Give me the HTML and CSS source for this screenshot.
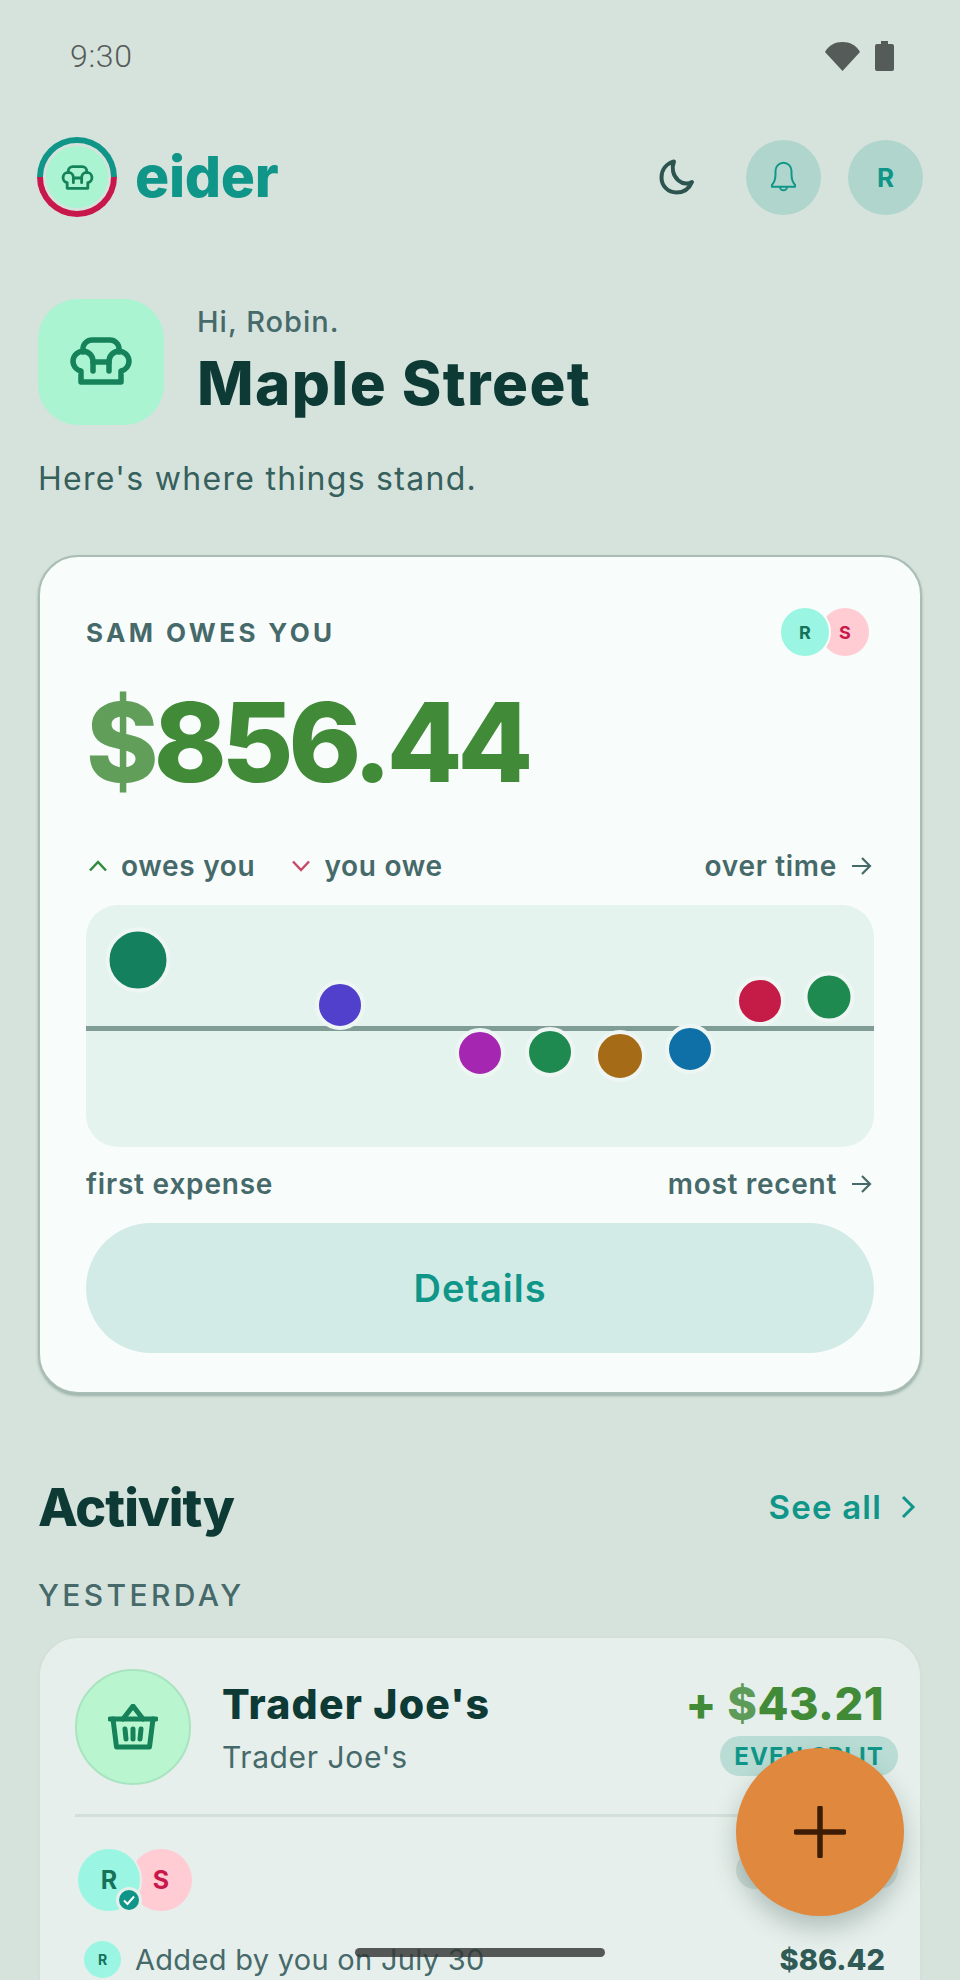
FILE: index.html
```html
<!DOCTYPE html>
<html lang="en">
<head>
<meta charset="utf-8">
<title>eider</title>
<link rel="stylesheet" href="styles.css">
</head>
<body>
<div class="screen">
  <div class="status">
    <span class="time">9:30</span>
    <div class="status-icons">
      <svg class="wifi" viewBox="0 0 35 29"><path d="M0 10C4 3 10 0 17.500 0S31 3 35 10L17.500 29Z"/></svg>
      <svg class="battery" viewBox="0 0 19 30"><path d="M6 0h7v3h4a2 2 0 0 1 2 2v23a2 2 0 0 1-2 2H2a2 2 0 0 1-2-2V5a2 2 0 0 1 2-2h4Z"/></svg>
    </div>
  </div>

  <header class="topbar">
    <div class="brand">
      <div class="logo">
        <div class="logo-disc">
          <svg class="chair chair-small" viewBox="0 0 64 48"><path d="M24 34V24A10 10 0 1 0 12 34V45H52V34A10 10 0 1 0 40 24V34"/><path d="M14 15V12A9 9 0 0 1 23 3H41A9 9 0 0 1 50 12V15"/><path d="M24 25H40"/></svg>
        </div>
      </div>
      <span class="wordmark">eider</span>
    </div>
    <div class="actions">
      <svg class="moon" viewBox="0 0 36 36"><path d="M15 2.500C8 4.500 2.500 10 2.500 18.500C2.500 27 9 33.500 17.500 33.500C25 33.500 30.500 29 33 23C30 25 24 25.500 19.500 21.500C13.500 16.500 12.500 8.500 15 2.500Z"/></svg>
      <div class="round-btn">
        <svg class="bell" viewBox="0 0 30 36"><path d="M2 27C5 24 6 20 6 15V11A9 9 0 0 1 24 11V15C24 20 25 24 28 27V29H2Z"/><path d="M11 29A4 4 0 0 0 19 29"/></svg>
      </div>
      <div class="round-btn user">R</div>
    </div>
  </header>

  <section class="hero">
    <div class="hero-icon">
      <svg class="chair chair-large" viewBox="0 0 64 48"><path d="M24 34V24A10 10 0 1 0 12 34V45H52V34A10 10 0 1 0 40 24V34"/><path d="M14 15V12A9 9 0 0 1 23 3H41A9 9 0 0 1 50 12V15"/><path d="M24 25H40"/></svg>
    </div>
    <div class="hero-text">
      <div class="hi">Hi, Robin.</div>
      <h1 class="place">Maple Street</h1>
    </div>
  </section>
  <p class="lead">Here's where things stand.</p>

  <section class="balance">
    <div class="balance-head">
      <span class="eyebrow">SAM OWES YOU</span>
      <div class="pair">
        <span class="av av-r">R</span>
        <span class="av av-s">S</span>
      </div>
    </div>
    <div class="amount"><span class="cur">$</span>856.44</div>
    <div class="legend">
      <div class="legend-left">
        <span class="legend-item"><svg class="caret up" viewBox="0 0 20 12"><path d="M2 10.500L10 2L18 10.500"/></svg>owes you</span>
        <span class="legend-item"><svg class="caret down" viewBox="0 0 20 12"><path d="M2 1.500L10 10L18 1.500"/></svg>you owe</span>
      </div>
      <span class="legend-item">over time<svg class="arrow" viewBox="0 0 22 20"><path d="M2 10H20M12 2L20 10L12 18"/></svg></span>
    </div>
    <div class="chart">
      <div class="zero"></div>
      <span class="dot d1"></span>
      <span class="dot d2"></span>
      <span class="dot d3"></span>
      <span class="dot d4"></span>
      <span class="dot d5"></span>
      <span class="dot d6"></span>
      <span class="dot d7"></span>
      <span class="dot d8"></span>
    </div>
    <div class="axis">
      <span>first expense</span>
      <span class="legend-item">most recent<svg class="arrow" viewBox="0 0 22 20"><path d="M2 10H20M12 2L20 10L12 18"/></svg></span>
    </div>
    <div class="details-btn">Details</div>
  </section>

  <div class="section-head">
    <h2 class="section-title">Activity</h2>
    <span class="see-all">See all<svg class="chev" viewBox="0 0 16 26"><path d="M3 3L13 13L3 23"/></svg></span>
  </div>
  <div class="day">YESTERDAY</div>

  <article class="item">
    <div class="item-top">
      <div class="item-icon">
        <svg class="basket" viewBox="0 0 50 46"><path d="M15 15L25 2L35 15"/><path d="M2 15H48"/><path d="M5 15L8.500 43H41.500L45 15"/><path d="M17 25L18 35M25 25V35M33 25L32 35"/></svg>
      </div>
      <div class="item-main">
        <div class="item-title">Trader Joe's</div>
        <div class="item-sub">Trader Joe's</div>
      </div>
      <div class="item-side">
        <div class="item-amount">+ <span class="cur">$</span>43.21</div>
        <span class="tag">EVEN SPLIT</span>
      </div>
    </div>
    <div class="item-bottom">
      <div class="people">
        <span class="pav pav-r">R
          <span class="check"><svg viewBox="0 0 16 16"><path d="M3 8.500L6.500 12L13 4.500"/></svg></span>
        </span>
        <span class="pav pav-s">S</span>
      </div>
      <span class="tag tag-grey">DETAILS</span>
    </div>
    <div class="item-foot">
      <div class="added">
        <span class="mini">R</span>
        <span>Added by you on July 30</span>
      </div>
      <span class="total">$86.42</span>
    </div>
  </article>

  <div class="fab"><svg viewBox="0 0 52 52"><path d="M26 2V50M2 26H50"/></svg></div>
  <div class="home-bar"></div>
</div>
</body>
</html>
```

FILE: styles.css
```css
* { box-sizing: border-box; }
html, body { margin: 0; padding: 0; }
body { background: #d6e3dc; font-family: "Inter", "Liberation Sans", sans-serif; color: #0e3a36; }
.screen { position: relative; width: 960px; height: 1980px; overflow: hidden; padding: 0 38px; }

.status { display: flex; justify-content: space-between; align-items: center; height: 112px; padding: 0 28px 0 32px; }
.time { font-family: "Roboto", sans-serif; font-size: 32px; font-weight: 300; letter-spacing: .7px; color: #555b58; }
.status-icons { display: flex; align-items: center; gap: 15px; }
.wifi { width: 35px; height: 29px; fill: #555b58; }
.battery { width: 19px; height: 30px; fill: #555b58; }

.topbar { display: flex; justify-content: space-between; align-items: center; height: 80px; margin-top: 25px; }
.brand { display: flex; align-items: center; gap: 18px; margin-left: -1px; }
.logo { width: 80px; height: 80px; border-radius: 50%; padding: 6px; background: linear-gradient(#0f9688 50%, #c8174a 50%); }
.logo-disc { width: 100%; height: 100%; border-radius: 50%; background: #aaf4d2; border: 3px solid #d6e3dc; display: flex; align-items: center; justify-content: center; }
.wordmark { font-family: "Inter", sans-serif; font-weight: 800; font-size: 57px; letter-spacing: -.3px; line-height: 1; color: #0f9688; margin-top: -2px; }
.chair { fill: none; stroke: #15825a; stroke-linejoin: round; stroke-linecap: round; stroke-width: 5.500; }
.chair-small { width: 33px; height: 25px; }
.chair-large { width: 64px; height: 48px; margin-top: -2px; }
.actions { display: flex; align-items: center; gap: 27px; margin-right: -1px; }
.moon { width: 36px; height: 36px; margin-right: 24px; fill: none; stroke: #2e5450; stroke-width: 4; stroke-linejoin: round; }
.round-btn { width: 75px; height: 75px; border-radius: 50%; background: #b0d5cc; display: flex; align-items: center; justify-content: center; }
.user { font-size: 26px; font-weight: 700; color: #0f9688; }
.bell { width: 27px; height: 32px; fill: none; stroke: #0f9688; stroke-width: 2.200; stroke-linejoin: round; }

.hero { display: flex; align-items: center; gap: 33px; margin-top: 82px; }
.hero-icon { width: 126px; height: 126px; border-radius: 40px; background: #aaf4d2; display: flex; align-items: center; justify-content: center; }
.hero-text { padding-top: 4px; }
.hi { font-size: 29px; font-weight: 500; letter-spacing: 1px; color: #46696a; line-height: 36px; margin-top: -6px; }
.place { margin: 8px 0 0; font-family: "Inter", sans-serif; font-size: 60px; font-weight: 800; letter-spacing: 1.400px; line-height: 70px; color: #0e3a36; }
.lead { margin: 33px 0 0; font-size: 32px; font-weight: 400; letter-spacing: 1.300px; line-height: 42px; color: #36605c; }

.balance { margin-top: 55px; height: 839px; padding: 51px 46px 0 46px; background: #f8fcfa; border: 2px solid #a9bdb6; border-radius: 40px; box-shadow: 0 2px 3px rgba(40, 80, 70, .35); }
.balance-head { display: flex; justify-content: space-between; align-items: center; height: 48px; }
.eyebrow { font-size: 26px; font-weight: 700; letter-spacing: 3.400px; color: #46696a; }
.pair { display: flex; margin-right: 5px; }
.av { width: 48px; height: 48px; border-radius: 50%; display: flex; align-items: center; justify-content: center; font-size: 18px; font-weight: 700; }
.av-r { background: #9af6e2; color: #15735a; position: relative; z-index: 1; box-shadow: 0 0 0 2px #f8fcfa; }
.av-s { background: #ffccd4; color: #c8174a; margin-left: -8px; }
.amount { margin-top: 23px; font-family: "Inter", sans-serif; font-size: 110px; font-weight: 800; letter-spacing: -5px; line-height: 126px; color: #408a38; }
.cur { opacity: .82; }
.legend { display: flex; justify-content: space-between; align-items: center; margin-top: 41px; height: 40px; padding-right: 2px; }
.legend-left { display: flex; gap: 34px; }
.legend-item { display: inline-flex; align-items: center; gap: 13px; font-size: 28px; font-weight: 600; letter-spacing: .7px; color: #46696a; }
.caret { width: 20px; height: 12px; margin-left: 2px; fill: none; stroke-width: 2.500; }
.up { stroke: #2f8a3a; }
.down { stroke: #c84a6a; }
.arrow { width: 22px; height: 20px; fill: none; stroke: #46696a; stroke-width: 2.200; }
.chart { position: relative; height: 242px; margin-top: 19px; background: #e5f3ef; border-radius: 32px; }
.zero { position: absolute; left: 0; right: 0; top: 121px; height: 5px; background: #7f9d94; }
.dot { position: absolute; border-radius: 50%; border: 4px solid #eef6f3; transform: translate(-50%, -50%); }
.d1 { left: 52px; top: 55px; width: 65px; height: 65px; background: #15805e; }
.d2 { left: 254px; top: 100px; width: 50px; height: 50px; background: #5040cc; }
.d3 { left: 394px; top: 148px; width: 50px; height: 50px; background: #a526b0; }
.d4 { left: 464px; top: 147px; width: 50px; height: 50px; background: #1f8a50; }
.d5 { left: 534px; top: 151px; width: 52px; height: 52px; background: #a56b16; }
.d6 { left: 604px; top: 144px; width: 50px; height: 50px; background: #0f70a8; }
.d7 { left: 674px; top: 96px; width: 50px; height: 50px; background: #c41c46; }
.d8 { left: 743px; top: 92px; width: 51px; height: 51px; background: #1f8a50; }
.axis { display: flex; justify-content: space-between; align-items: center; margin-top: 17px; height: 40px; padding-right: 2px; font-size: 28px; font-weight: 600; letter-spacing: .8px; color: #46696a; }
.details-btn { margin-top: 19px; height: 130px; border-radius: 65px; background: #d3ebe6; color: #0f9688; font-size: 38px; font-weight: 600; letter-spacing: 1px; display: flex; align-items: center; justify-content: center; }

.section-head { display: flex; justify-content: space-between; align-items: center; margin-top: 78px; height: 70px; }
.section-title { margin: 0; font-family: "Inter", sans-serif; font-size: 52px; font-weight: 800; letter-spacing: -1px; color: #0e3a36; }
.see-all { display: inline-flex; align-items: center; gap: 18px; font-size: 33px; font-weight: 600; letter-spacing: 1.200px; color: #0f9688; margin-right: 6px; }
.chev { width: 16px; height: 26px; fill: none; stroke: #0f9688; stroke-width: 3; }
.day { margin-top: 35px; font-size: 30px; font-weight: 500; letter-spacing: 3.400px; line-height: 36px; color: #46696a; }

.item { margin-top: 23px; height: 440px; background: #e6efeb; border: 2px solid #d3e0da; border-radius: 40px; padding: 31px 0 0 35px; }
.item-top { display: flex; align-items: flex-start; height: 148px; border-bottom: 3px solid #d3e0da; margin-right: 22px; }
.item-icon { width: 116px; height: 116px; border-radius: 50%; background: #b9f6cf; border: 2px solid #a8e4c0; display: flex; align-items: center; justify-content: center; flex: none; }
.basket { width: 50px; height: 46px; fill: none; stroke: #15825a; stroke-width: 5; stroke-linejoin: round; stroke-linecap: round; }
.item-main { margin-left: 31px; flex: 1; }
.item-title { font-family: "Inter", sans-serif; font-size: 41px; font-weight: 800; letter-spacing: 1.200px; line-height: 50px; margin-top: 10px; }
.item-sub { font-size: 30px; letter-spacing: .6px; line-height: 36px; color: #46696a; margin-top: 10px; }
.item-side { display: flex; flex-direction: column; align-items: flex-end; }
.item-amount { font-family: "Inter", sans-serif; font-size: 45px; font-weight: 800; letter-spacing: .5px; line-height: 54px; color: #408a38; white-space: nowrap; margin-right: 14px; margin-top: 8px; }
.tag { display: inline-block; padding: 0 14px; height: 40px; line-height: 42px; border-radius: 20px; background: #b9dcd5; color: #0f9688; font-size: 24px; font-weight: 700; letter-spacing: 1.100px; white-space: nowrap; }
.item-side .tag { margin-top: 5px; }
.item-bottom { display: flex; justify-content: space-between; align-items: flex-start; margin-right: 22px; padding-top: 32px; }
.people { display: flex; margin-left: 3px; }
.pav { position: relative; width: 62px; height: 62px; border-radius: 50%; display: flex; align-items: center; justify-content: center; font-size: 25px; font-weight: 700; }
.pav-r { background: #9af6e2; color: #15735a; z-index: 1; box-shadow: 0 0 0 2px #e6efeb; }
.pav-s { background: #ffccd4; color: #c8174a; margin-left: -10px; }
.check { position: absolute; right: -2px; bottom: -2px; width: 26px; height: 26px; border-radius: 50%; background: #0f9688; border: 3px solid #e6efeb; display: flex; align-items: center; justify-content: center; }
.check svg { width: 16px; height: 16px; fill: none; stroke: #fff; stroke-width: 2; }
.tag-grey { background: #cddbd6; color: #2f5a55; margin-top: 2px; width: 162px; height: 38px; }
.item-foot { display: flex; justify-content: space-between; align-items: center; margin-top: 28px; margin-right: 35px; height: 40px; }
.added { display: flex; align-items: center; gap: 14px; margin-left: 9px; font-size: 29px; letter-spacing: .3px; color: #46696a; white-space: nowrap; }
.mini { width: 37px; height: 37px; border-radius: 50%; background: #9af6e2; color: #15735a; display: flex; align-items: center; justify-content: center; font-size: 14px; font-weight: 700; letter-spacing: 0; }
.total { font-family: "Inter", sans-serif; font-size: 29px; font-weight: 800; color: #2f5a55; }

.fab { position: absolute; left: 736px; top: 1748px; width: 168px; height: 168px; border-radius: 50%; background: #e0883e; box-shadow: 0 12px 24px rgba(40, 70, 60, .28); display: flex; align-items: center; justify-content: center; }
.fab svg { width: 52px; height: 52px; fill: none; stroke: #3d1c05; stroke-width: 5.500; stroke-linecap: round; }
.home-bar { position: absolute; left: 355px; top: 1948px; width: 250px; height: 9px; border-radius: 5px; background: rgba(50, 55, 52, .82); }
```
